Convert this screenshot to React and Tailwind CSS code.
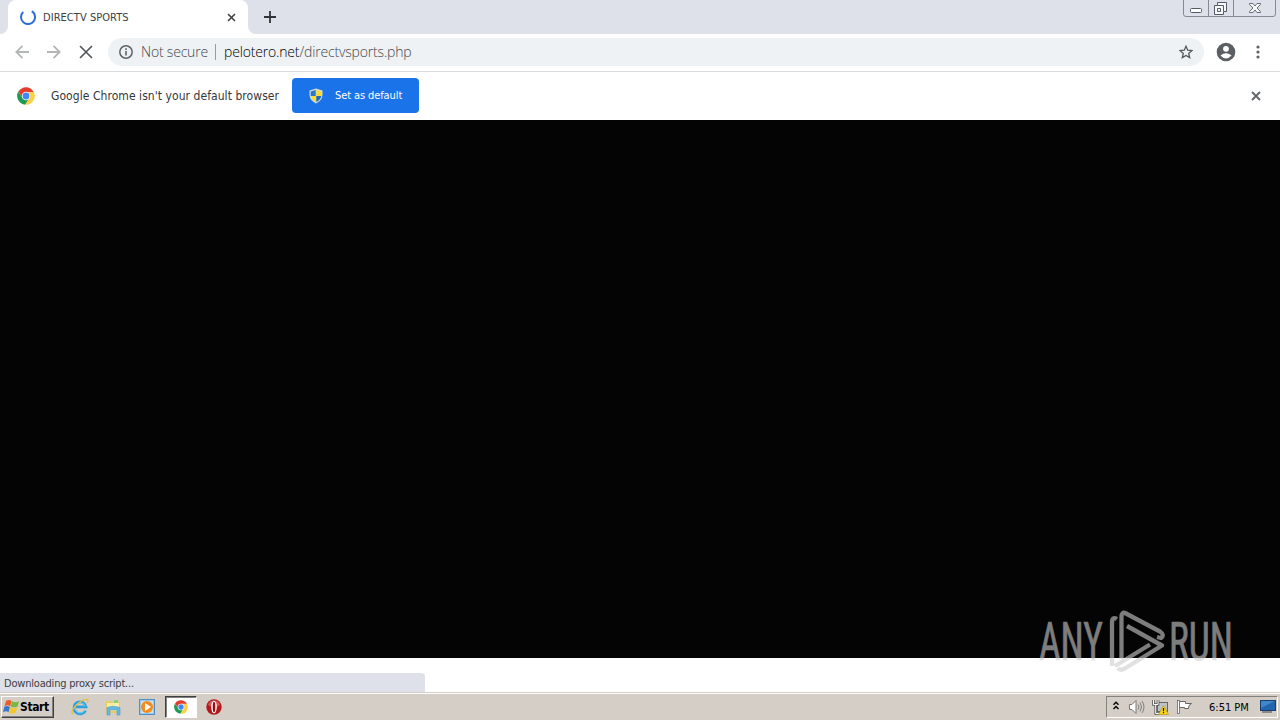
function ChromeLogo({ size = 18 }) {
  return (
    <svg width={size} height={size} viewBox="0 0 18 18">
      <path d="M1.2 4.5A9 9 0 0 0 8.2 17.700L12.500 11 9 9 5.500 11Z" fill="#1e9b52" />
      <path d="M16.600 4.500A8.800 8.800 0 0 1 8.200 17.700L12.500 11 10.500 4.800Z" fill="#fcd04b" />
      <path d="M1.400 4.500A8.800 8.800 0 0 1 16.600 4.900H9L5.200 10.600Z" fill="#e33b2e" />
      <circle cx="9" cy="9" r="4.2" fill="#fff" />
      <circle cx="9" cy="9" r="3.4" fill="#4285f4" />
    </svg>
  );
}

function CloseIcon({ size, stroke = 2 }) {
  return (
    <svg width={size} height={size} viewBox={`0 0 ${size} ${size}`} className="shrink-0">
      <path d={`M1 1L${size - 1} ${size - 1}M${size - 1} 1L1 ${size - 1}`} stroke="currentColor" strokeWidth={stroke} />
    </svg>
  );
}

function WindowControls() {
  return (
    <svg width="94" height="18" viewBox="0 0 94 18" className="shrink-0" fill="none">
      <path d="M.5 0V14Q.5 16.500 3 16.500H90Q92.500 16.500 92.500 14V0M25.500 0V16M50.500 0V16" stroke="#858a94" />
      <rect x="7.500" y="8.500" width="11" height="4" rx="1" fill="#fff" stroke="#555b66" />
      <path d="M34.500 2.500H43.500V11.500H40.500V14.500H31.500V5.500H34.500Z" fill="#f7f8fa" stroke="#555b66" />
      <path d="M34.500 5.500H40.500V11.500M34.500 8.500H37.500V11.500H34.500Z" stroke="#555b66" />
      <path d="M66.500 3.500H70L72 6 74 3.500H77.500V4.500L74 8 77.500 11.500V12.500H74L72 10 70 12.500H66.500V11.500L70 8 66.500 4.500Z" fill="#f7f8fa" stroke="#666b75" />
    </svg>
  );
}

function TabStrip() {
  return (
    <div className="flex h-[34px] bg-[#dee1e9]">
      <div className="flex w-2 items-end bg-white">
        <div className="h-[34px] w-2 rounded-br-lg bg-[#dee1e9]" />
      </div>
      <div className="bg-[#dee1e9]">
        <div className="flex h-[34px] w-60 items-center rounded-t-lg bg-white pl-3 pr-3">
          <svg width="16" height="16" viewBox="0 0 16 16" fill="none" className="shrink-0">
            <path d="M3.200 3A7 7 0 1 0 11.800 2.200" stroke="#2b6fdc" strokeWidth="2" />
          </svg>
          <span className="ml-[7px] mt-[2px] w-[100px] whitespace-nowrap text-[11px] tracking-[0.05px] text-[#3c4043]">DIRECTV SPORTS</span>
          <span className="ml-auto text-[#3c4043]"><CloseIcon size={9} stroke={1.6} /></span>
        </div>
      </div>
      <div className="w-2 bg-white">
        <div className="h-[34px] w-2 rounded-bl-lg bg-[#dee1e9]" />
      </div>
      <svg width="12" height="12" viewBox="0 0 12 12" className="ml-2 mt-[11px]">
        <path d="M6 0V12M0 6H12" stroke="#303338" strokeWidth="1.800" />
      </svg>
      <div className="ml-auto mr-[3px]"><WindowControls /></div>
    </div>
  );
}

function Toolbar() {
  return (
    <div className="flex h-[38px] items-center border-b border-[#d9dbdd] bg-white pb-[2px] pl-[15px] pr-[14px]">
      <svg width="14" height="14" viewBox="0 0 14 14" fill="none" stroke="#b4b5b7" strokeWidth="1.800">
        <path d="M14 7H1.500M7.500 .8L1.300 7L7.500 13.200" />
      </svg>
      <svg width="14" height="14" viewBox="0 0 14 14" fill="none" stroke="#b4b5b7" strokeWidth="1.800" className="ml-[18px]">
        <path d="M0 7H12.500M6.500 .8L12.700 7L6.500 13.200" />
      </svg>
      <span className="ml-[18px] text-[#505357]"><CloseIcon size={14} stroke={1.6} /></span>
      <div className="ml-[15px] flex h-7 w-[1096px] items-center rounded-full bg-[#eff2f5] px-[11px] font-['Open_Sans','Noto_Sans',sans-serif] text-[14px] font-light [font-stretch:normal]">
        <svg width="14" height="14" viewBox="0 0 14 14" fill="none" stroke="#5f6368" className="shrink-0">
          <circle cx="7" cy="7" r="6.200" strokeWidth="1.500" />
          <path d="M7 6V10.500M7 3.300V4.900" strokeWidth="1.600" />
        </svg>
        <span className="ml-2 w-[67px] whitespace-nowrap tracking-[-0.2px] text-[#43474c]">Not secure</span>
        <div className="ml-[7px] h-4 w-px bg-[#989ba0]" />
        <span className="ml-2 whitespace-nowrap tracking-[-0.17px] text-[#43474c]"><span className="text-black">pelotero.net</span>/directvsports.php</span>
        <svg width="14" height="14" viewBox="0 0 14 14" className="ml-auto" fill="none" stroke="#55595e" strokeWidth="1.300">
          <path d="M7 1.200L8.700 5.200 13 5.600 9.700 8.400 10.700 12.600 7 10.400 3.300 12.600 4.300 8.400 1 5.600 5.300 5.200Z" />
        </svg>
      </div>
      <svg width="20" height="20" viewBox="0 0 20 20" className="ml-3">
        <circle cx="10" cy="10" r="9.300" fill="#5b5e63" />
        <circle cx="10" cy="6.800" r="2.900" fill="#fff" />
        <path d="M4.400 13.600Q10 8.800 15.600 13.600Q10 19.500 4.400 13.600Z" fill="#fff" />
      </svg>
      <svg width="4" height="14" viewBox="0 0 4 14" fill="#5f6368" className="ml-auto mr-[6px]">
        <circle cx="2" cy="2" r="1.600" /><circle cx="2" cy="7" r="1.600" /><circle cx="2" cy="12" r="1.600" />
      </svg>
    </div>
  );
}

function Shield() {
  return (
    <svg width="14" height="16" viewBox="0 0 14 16">
      <path d="M7 .5L13.500 2.500V7Q13.200 12.500 7 15.500Q.8 12.500 .5 7V2.500Z" fill="#d5dbd2" />
      <path d="M6.700 2V8H1.700V3.400Z" fill="#2878cf" />
      <path d="M7.300 2L12.300 3.400V8H7.300Z" fill="#fbdc35" />
      <path d="M1.700 8H6.700V14Q2.200 11.500 1.700 8Z" fill="#fbdc35" />
      <path d="M7.300 8H12.300Q11.800 11.500 7.300 14Z" fill="#2367b5" />
    </svg>
  );
}

function InfoBar() {
  return (
    <div className="flex h-12 items-center bg-white pl-[17px] pr-[19px]">
      <ChromeLogo />
      <span className="ml-4 w-[229px] whitespace-nowrap text-[12px] tracking-[0.06px] text-[#34373b]">Google Chrome isn't your default browser</span>
      <button className="mb-px ml-3 flex h-[35px] w-[127px] items-center rounded bg-[#1a73e8] pl-[17px] text-[11px] text-white">
        <Shield />
        <span className="ml-3 mt-px whitespace-nowrap tracking-[-0.1px]">Set as default</span>
      </button>
      <span className="ml-auto text-[#65686c]"><CloseIcon size={10} /></span>
    </div>
  );
}

function Watermark() {
  return (
    <svg width="240" height="80" viewBox="0 0 240 80" className="absolute left-[1036px] top-[606px] opacity-60" fill="#cecece">
      <g stroke="#cecece" strokeWidth=".7" fontSize="53" className="font-['Roboto',sans-serif]">
        <text x="3" y="54" textLength="64" lengthAdjust="spacingAndGlyphs">ANY</text>
        <text x="133" y="54" textLength="64" lengthAdjust="spacingAndGlyphs">RUN</text>
      </g>
      <path
        d="M81 13Q76 10 76 17V60M85.500 53V11Q85.500 5 90 7.500L124 25.500Q129 29 125 32L121 31M91 20L126 39.500L88 63Q84 65 82 62M79 60L114 38.500"
        fill="none"
        stroke="#cecece"
        strokeWidth="4.300"
        strokeLinejoin="round"
      />
    </svg>
  );
}

function WindowsFlag() {
  return (
    <svg width="17" height="16" viewBox="0 0 17 16" className="shrink-0">
      <path d="M3 2Q5.500 .2 8.700 2L7.200 7.200Q4.500 5.500 1.500 7.200Z" fill="#e95d27" />
      <path d="M9.200 2.300Q12 4 16 2.300L14.500 7.800Q10.500 9 7.700 7.400Z" fill="#75b943" />
      <path d="M1.300 7.800Q4 6.300 6.900 8L5.500 13.200Q3 11.500 0 13.200Z" fill="#3978c8" />
      <path d="M7.400 8.200Q10 10 14.200 8.400L12.700 13.700Q9 15.500 6 13.700Z" fill="#f5c72b" />
    </svg>
  );
}

function IeIcon() {
  return (
    <svg width="18" height="18" viewBox="0 0 18 18" fill="none" className="shrink-0">
      <path d="M14.500 12.500A6 6 0 1 1 15 8.800H5" stroke="#2d9fdf" strokeWidth="2.800" />
      <path d="M14 11.800A5.200 5.200 0 1 1 14.200 8.500" stroke="#6fd0f8" strokeWidth="1" />
      <path d="M2 16Q-1 15 4 8.500Q11 1 16 1.500Q18 2 16 5" stroke="#e6bd3c" strokeWidth="1.300" />
    </svg>
  );
}

function ExplorerIcon() {
  return (
    <svg width="17" height="17" viewBox="0 0 17 17" className="shrink-0">
      <path d="M1 2H6L7 3H15V14H1Z" fill="#e9cc67" />
      <path d="M2 4H14V12H2Z" fill="#fff0a7" />
      <path d="M9 1H13V4H9Z" fill="#8fcf79" />
      <path d="M2 8.500Q8 6 15 8.500V16H12V11H5V16H2Z" fill="#69b7e3" stroke="#4b99c9" strokeWidth=".6" />
    </svg>
  );
}

function PlayerIcon() {
  return (
    <svg width="16" height="16" viewBox="0 0 16 16" className="shrink-0">
      <rect x=".5" y=".5" width="15" height="15" fill="#9ac9eb" stroke="#4d91c6" />
      <rect x="2" y="2" width="12" height="12" fill="#cae2f1" />
      <circle cx="8" cy="8" r="6" fill="#f58b1b" />
      <path d="M6 4L12 8L6 12Z" fill="#fff" />
    </svg>
  );
}

function OperaIcon() {
  return (
    <svg width="16" height="16" viewBox="0 0 16 16" className="shrink-0">
      <circle cx="8" cy="8" r="7.700" fill="#b3181c" />
      <path d="M2 6A6.300 6.300 0 0 1 14 6Q8 10 2 6Z" fill="#d9575a" />
      <ellipse cx="8" cy="8" rx="2.800" ry="6.300" fill="#fff" />
      <ellipse cx="8" cy="8" rx="1.300" ry="5.300" fill="#8d1014" />
    </svg>
  );
}

function Tray() {
  return (
    <div className="ml-auto mr-[2px] flex h-[22px] w-[172px] items-center border border-b-white border-l-[#85827c] border-r-white border-t-[#85827c] pl-[6px]">
      <svg width="6" height="9" viewBox="0 0 6 9" fill="none" stroke="#000" strokeWidth="1.400" className="mb-[3px]">
        <path d="M.5 3.700L3 1.200L5.500 3.700M.5 8L3 5.500L5.500 8" />
      </svg>
      <svg width="17" height="16" viewBox="0 0 17 16" fill="none" stroke="#777" className="ml-[9px]">
        <path d="M1.500 5.500H4L8 1.500V14.500L4 10.500H1.500Z" fill="#fff" />
        <path d="M10 5.500Q12 8 10 10.500M12 3.500Q15 8 12 12.500M14 2Q18 8 14 14" strokeWidth=".9" />
      </svg>
      <svg width="17" height="16" viewBox="0 0 17 16" fill="none" className="ml-[7px]">
        <rect x="5.500" y="3.500" width="10" height="9" fill="#bfc1c2" stroke="#666" />
        <path d="M1.500 1V5.500H6V1M3.700 5.500V14.500H8" stroke="#555" strokeWidth="2.600" />
        <path d="M1.500 1V5.500H6V1M3.700 5.500V14.500H8" stroke="#fff" />
        <path d="M11.500 6.500L16.500 15.500H6.500Z" fill="#f7d51d" stroke="#b79a15" strokeWidth=".7" />
        <path d="M11.500 9V12.300M11.500 13V14.300" stroke="#111" strokeWidth="1.200" />
      </svg>
      <svg width="17" height="16" viewBox="0 0 17 16" fill="#fff" stroke="#666" className="ml-[7px]">
        <path d="M3.500 2.500H9.500V4.500H15.500Q12 6 12.500 9.500H8.500V8.500H3.500Z" />
        <rect x="1.500" y="1.500" width="2" height="13" strokeWidth=".8" />
      </svg>
      <span className="ml-4 mt-[2px] whitespace-nowrap text-[11px] text-black">6:51 PM</span>
      <svg width="16" height="14" viewBox="0 0 16 14" className="ml-auto mr-[1px]">
        <rect x=".5" y=".5" width="15" height="10" fill="#2464ad" stroke="#183d70" />
        <path d="M1 1H15L1 8Z" fill="#3f86cb" />
        <path d="M2 12H12" stroke="#8a8a8a" strokeWidth="2" />
      </svg>
    </div>
  );
}

function Taskbar() {
  return (
    <div className="flex h-7 items-center border-t border-[#d4cec7] bg-[#d4cec7] pt-px shadow-[inset_0_1px_0_#fff]">
      <button className="ml-px flex h-[22px] w-[53px] items-center border border-b-[#404040] border-l-white border-r-[#404040] border-t-white pl-px text-[12px] font-bold text-black shadow-[inset_-1px_-1px_0_#808080]">
        <WindowsFlag />
        <span className="whitespace-nowrap tracking-[-0.4px]">Start</span>
      </button>
      <div className="ml-[17px] flex items-center">
        <IeIcon />
        <span className="ml-4"><ExplorerIcon /></span>
        <span className="ml-[17px]"><PlayerIcon /></span>
        <div className="ml-[10px] flex h-[22px] w-8 items-center justify-center border border-b-white border-l-[#404040] border-r-white border-t-[#404040] bg-white shadow-[inset_1px_1px_0_#808080]">
          <ChromeLogo size={14} />
        </div>
        <span className="ml-[9px]"><OperaIcon /></span>
      </div>
      <Tray />
    </div>
  );
}

export default function App() {
  return (
    <div className="relative flex h-[720px] w-[1280px] flex-col overflow-hidden bg-white font-['DejaVu_Sans_Condensed','DejaVu_Sans',sans-serif] [font-stretch:condensed]">
      <TabStrip />
      <Toolbar />
      <InfoBar />
      <div className="h-[538px] bg-[#040404]" />
      <div className="flex h-[34px] items-end">
        <div className="flex h-[19px] w-[425px] items-center rounded-tr bg-[#dee1e9] pl-1 pt-[3px] text-[11px] tracking-[-0.2px] text-[#3c4043]">Downloading proxy script...</div>
      </div>
      <Taskbar />
      <Watermark />
    </div>
  );
}
